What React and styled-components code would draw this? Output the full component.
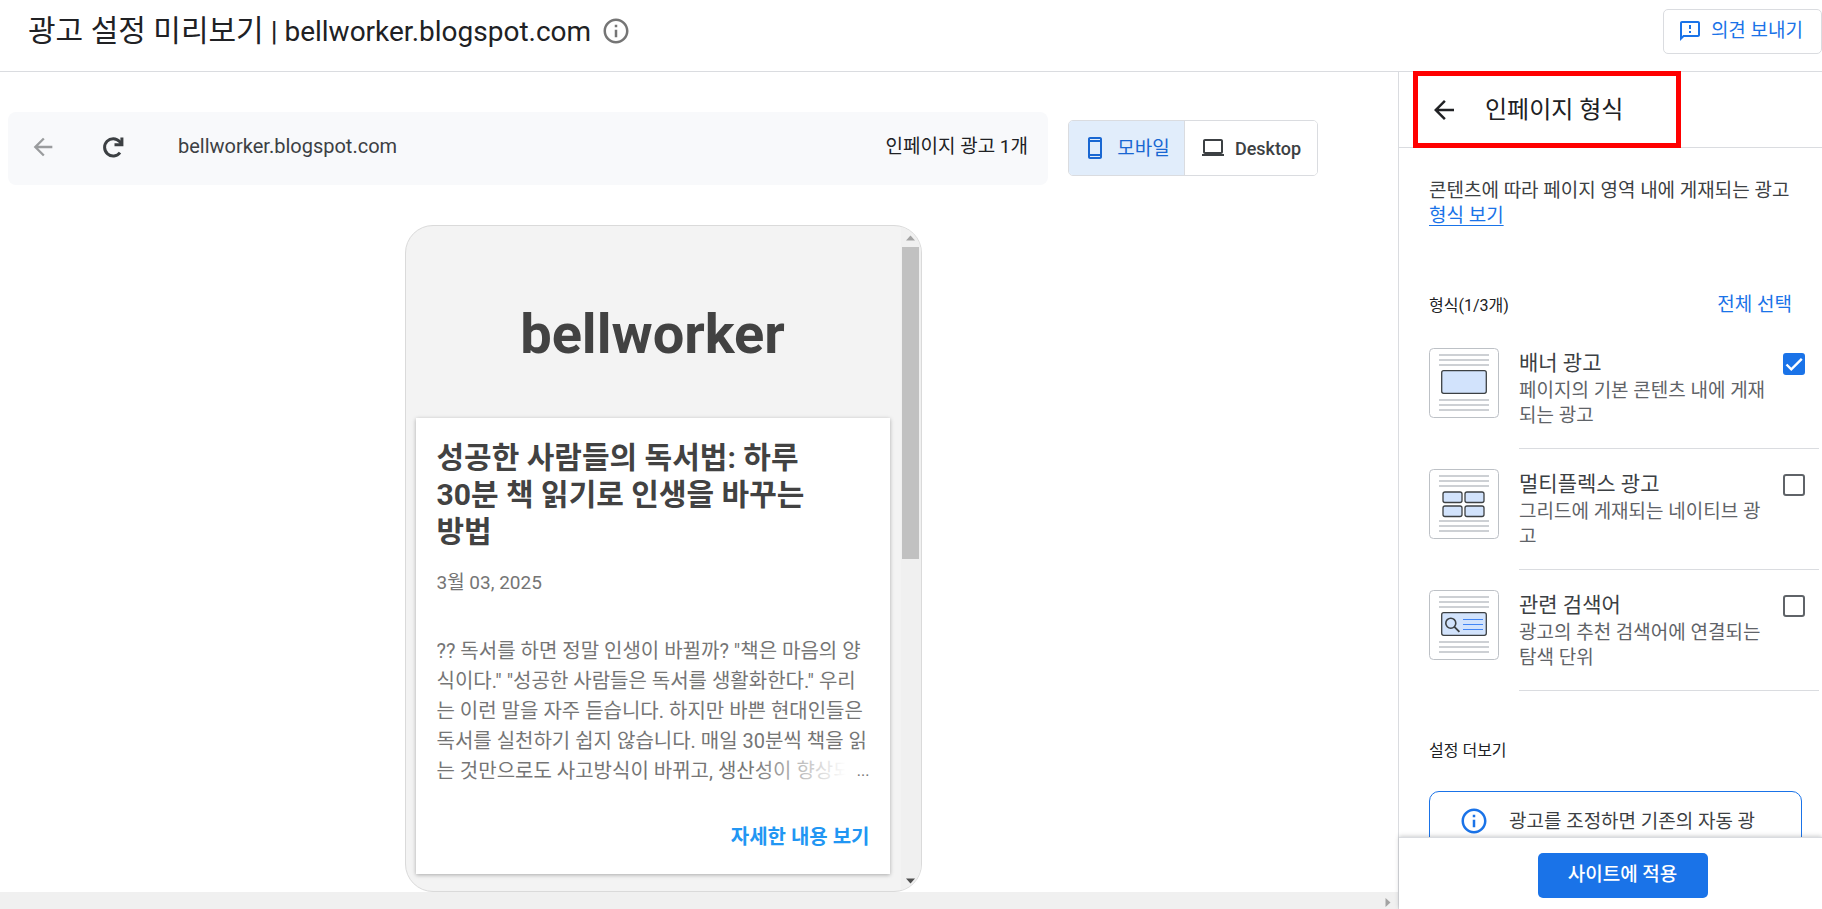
import React, { useState } from "react";
import styled, { createGlobalStyle, css } from "styled-components";

const GlobalStyle = createGlobalStyle`
  * { box-sizing: border-box; }
  body {
    margin: 0;
    background: #fff;
    color: #202124;
    font-family: Roboto, "Noto Sans CJK KR", sans-serif;
    font-size: 19px;
    line-height: 25px;
    overflow: hidden;
  }
  h1, h2, h3, p, ul { margin: 0; padding: 0; font-weight: 400; }
  button { font: inherit; cursor: pointer; }
`;

/* ---------- icons ---------- */

const PATHS = {
  info: "M11 7h2v2h-2zm0 4h2v6h-2zm1-9C6.48 2 2 6.48 2 12s4.48 10 10 10 10-4.48 10-10S17.52 2 12 2zm0 18c-4.41 0-8-3.59-8-8s3.59-8 8-8 8 3.59 8 8-3.59 8-8 8z",
  back: "M20 11H7.83l5.59-5.59L12 4l-8 8 8 8 1.41-1.41L7.83 13H20v-2z",
  feedback:
    "M20 2H4c-1.1 0-1.99.9-1.99 2L2 22l4-4h14c1.1 0 2-.9 2-2V4c0-1.1-.9-2-2-2zm0 14H5.17L4 17.17V4h16v12zM11 12h2v2h-2zm0-6h2v4h-2z",
  phone:
    "M17 1.01L7 1c-1.1 0-2 .9-2 2v18c0 1.1.9 2 2 2h10c1.1 0 2-.9 2-2V3c0-1.1-.9-1.99-2-1.99zM17 21H7v-1h10v1zm0-3H7V6h10v12zm0-14H7V3h10v1z",
  laptop:
    "M20 18c1.1 0 1.99-.9 1.99-2L22 5c0-1.1-.9-2-2-2H4c-1.1 0-2 .9-2 2v11c0 1.1.9 2 2 2H1v2h22v-2h-3zM4 5h16v11H4V5z",
};

const Svg = styled.svg`
  display: block;
  flex: none;
`;

function Icon({ name, size = 24, color = "currentColor" }) {
  return (
    <Svg width={size} height={size} viewBox="0 0 24 24" fill={color} aria-hidden="true">
      <path d={PATHS[name]} />
    </Svg>
  );
}

function RefreshIcon() {
  return (
    <Svg width={28} height={28} viewBox="0 0 28 28" fill="none" stroke="#3c4043" strokeWidth="3" aria-hidden="true">
      <path d="M21 19.6A8.6 8.6 0 1 1 20.6 8.6L22.6 11" />
      <path d="M22.9 4.4v7.4h-7.4" />
    </Svg>
  );
}

const THUMB_LINES = [7, 12, 17, 52, 57, 62];
const THUMB_TILES = [
  [14, 23],
  [36, 23],
  [14, 37],
  [36, 37],
];

function Thumb({ kind }) {
  return (
    <Svg width={70} height={70} viewBox="0 0 70 70" fill="none" aria-hidden="true">
      <rect x=".5" y=".5" width="69" height="69" rx="4" fill="#fff" stroke="#bdc1c6" />
      {THUMB_LINES.map((y) => (
        <path key={y} d={`M10 ${y}h50`} stroke="#cdd0d4" strokeWidth="2" />
      ))}
      {kind === "grid" ? (
        THUMB_TILES.map(([x, y]) => (
          <rect key={`${x}-${y}`} x={x} y={y} width="19" height="10.5" rx="2" fill="#d2e3fc" stroke="#3c4043" strokeWidth="1.3" />
        ))
      ) : (
        <rect x="12.7" y="22.7" width="44.6" height="22.6" rx="2" fill="#d2e3fc" stroke="#3c4043" strokeWidth="1.3" />
      )}
      {kind === "search" && (
        <>
          <circle cx="21.8" cy="33.2" r="5" stroke="#3c4043" strokeWidth="1.6" />
          <path d="M25.4 36.8l5 5" stroke="#3c4043" strokeWidth="1.8" />
          <path d="M34 29.5h20M34 34.5h20M34 39.5h20" stroke="#4285f4" strokeWidth="1.2" />
        </>
      )}
    </Svg>
  );
}

/* ---------- frame ---------- */

const Page = styled.div`
  display: flex;
  flex-direction: column;
  height: 100vh;
`;

const Header = styled.header`
  flex: none;
  display: flex;
  align-items: flex-start;
  justify-content: space-between;
  height: 72px;
  padding: 9px 0 0 28px;
  border-bottom: 1px solid #dadce0;
`;

const HeaderTitle = styled.div`
  display: flex;
  align-items: center;
  gap: 10px;
  height: 44px;
  color: #757575;
`;

const TitleText = styled.h1`
  color: #202124;
  font-size: 28px;
  line-height: 44px;
`;

const TitleLead = styled.span`
  font-size: 30px;
`;

const FeedbackButton = styled.button`
  display: flex;
  align-items: center;
  gap: 9px;
  height: 45px;
  padding: 0 18px 2px 14px;
  border: 1px solid #dadce0;
  border-radius: 5px;
  background: #fff;
  color: #1a73e8;
`;

const Body = styled.div`
  flex: 1;
  min-height: 0;
  display: grid;
  grid-template-columns: minmax(0, 1fr) 424px;
`;

/* ---------- preview ---------- */

const Preview = styled.main`
  display: flex;
  flex-direction: column;
  min-height: 0;
`;

const Workspace = styled.div`
  flex: 1;
  min-height: 0;
  display: flex;
  flex-direction: column;
  align-items: center;
  gap: 40px;
  padding: 40px 80px 0 8px;
`;

const ToolRow = styled.div`
  align-self: stretch;
  flex: none;
  display: flex;
  align-items: flex-start;
  gap: 20px;
`;

const AddressBar = styled.div`
  flex: 1;
  display: flex;
  align-items: center;
  height: 73px;
  padding: 0 20px 4px;
  border-radius: 8px;
  background: #f8f9fb;
`;

const IconButton = styled.button`
  display: grid;
  place-items: center;
  width: 30px;
  height: 40px;
  padding: 0;
  border: 0;
  background: none;
  color: ${(p) => (p.disabled ? "#9a9c9e" : "#202124")};
`;

const NavButtons = styled.div`
  display: flex;
  gap: 40px;
  margin-right: 50px;
`;

const Address = styled.span`
  flex: 1;
  color: #3c4043;
  font-size: 20px;
`;

const AdCount = styled.span`
  color: #202124;
`;

const Toggle = styled.div`
  display: flex;
  height: 56px;
  margin-top: 8px;
  border: 1px solid #dadce0;
  border-radius: 5px;
  overflow: hidden;
`;

const ToggleButton = styled.button`
  display: flex;
  align-items: center;
  justify-content: center;
  gap: 10px;
  width: ${(p) => (p.$active ? 116 : 132)}px;
  padding: 0;
  border: 0;
  font-size: 18px;
  font-weight: 500;
  background: #fff;
  color: #3c4043;
  ${(p) =>
    p.$active &&
    css`
      border-right: 1px solid #dadce0;
      font-size: 19px;
      font-weight: 400;
      background: #e1edfb;
      color: #1967d2;
    `}
`;

const Phone = styled.section`
  flex: 1;
  min-height: 0;
  display: flex;
  width: 517px;
  border: 1px solid #dadada;
  border-radius: 28px;
  background: #f3f3f3;
  overflow: hidden;
`;

const Screen = styled.div`
  flex: 1;
  display: flex;
  flex-direction: column;
  padding: 0 11px 17px 10px;
`;

const BlogName = styled.h2`
  flex: 1;
  display: grid;
  place-items: center;
  padding-top: 24px;
  color: #424242;
  font-size: 56px;
  line-height: 64px;
  font-weight: 700;
`;

const Card = styled.article`
  display: flex;
  flex-direction: column;
  padding: 21px 20px 20px 21px;
  background: #fff;
  box-shadow: 0 1px 4px rgba(0, 0, 0, 0.3);
  color: #757575;
  font-size: 20px;
  line-height: 30px;
`;

const PostTitle = styled.h3`
  width: 384px;
  color: #424242;
  font-size: 30px;
  line-height: 37px;
  font-weight: 700;
`;

const PostDate = styled.p`
  padding: 18px 0 38px;
  font-size: 19px;
`;

const Excerpt = styled.p`
  position: relative;
  height: 150px;
  overflow: hidden;
`;

const Fade = styled.span`
  position: absolute;
  right: 0;
  bottom: 0;
  width: 120px;
  height: 30px;
  background: linear-gradient(to right, rgba(255, 255, 255, 0), #fff 80%);
`;

const Dots = styled.span`
  position: absolute;
  right: 0;
  bottom: 0;
  font-size: 16px;
`;

const ReadMore = styled.a`
  align-self: flex-end;
  padding: 36px 0 2px;
  color: #2196f3;
  font-weight: 700;
  text-decoration: none;
`;

const VScroll = styled.div`
  flex: none;
  display: flex;
  flex-direction: column;
  align-items: center;
  width: 20px;
  padding: 9px 0 7px;
  background: #f0f0f0;
`;

const VThumb = styled.div`
  width: 17px;
  height: 312px;
  margin: 6px 0 auto;
  background: #c1c1c1;
`;

const HScroll = styled.div`
  flex: none;
  display: flex;
  align-items: center;
  justify-content: flex-end;
  height: 17px;
  padding: 3px 7px 0 0;
  background: #f0f0f0;
`;

/* ---------- settings panel ---------- */

const Panel = styled.aside`
  display: flex;
  flex-direction: column;
  min-height: 0;
  border-left: 1px solid #dadce0;
`;

const PanelHeader = styled.div`
  position: relative;
  flex: none;
  display: flex;
  align-items: center;
  gap: 26px;
  height: 76px;
  padding-left: 30px;
  border-bottom: 1px solid #dadce0;
`;

const Highlight = styled.div`
  position: absolute;
  left: 14px;
  top: -1px;
  width: 268px;
  height: 77px;
  border: 5px solid #f00;
  pointer-events: none;
`;

const PanelTitle = styled.h2`
  font-size: 24px;
  line-height: 32px;
`;

const PanelBody = styled.div`
  flex: 1;
  min-height: 0;
  overflow: hidden;
  padding: 30px 20px 0 30px;
`;

const Intro = styled.p`
  color: #3c4043;
`;

const Link = styled.a`
  color: #1a73e8;
  text-decoration: underline;
  text-underline-offset: 3px;
`;

const SectionHead = styled.div`
  display: flex;
  align-items: center;
  justify-content: space-between;
  height: 40px;
  margin: 56px 0 24px;
  padding-right: 10px;
`;

const Label = styled.h3`
  padding-top: 4px;
  font-size: 16px;
  line-height: 20px;
`;

const TextButton = styled.button`
  padding: 0;
  border: 0;
  background: none;
  color: #1a73e8;
`;

const FormatList = styled.ul`
  list-style: none;
`;

const FormatItem = styled.li`
  display: flex;
  gap: 20px;
  height: 121px;
`;

const FormatRow = styled.label`
  flex: 1;
  display: flex;
  justify-content: space-between;
  height: 101px;
  margin-right: -17px;
  padding-right: 14px;
  border-bottom: 1px solid #dadce0;
`;

const FormatText = styled.span`
  width: 256px;
  color: #5f6368;
`;

const FormatName = styled.span`
  display: block;
  color: #3c4043;
  font-size: 21px;
  line-height: 30px;
`;

const Check = styled.input`
  flex: none;
  appearance: none;
  width: 22px;
  height: 22px;
  margin: 5px 0 0;
  border: 2px solid #5f6368;
  border-radius: 3px;
  background: #fff;
  cursor: pointer;
  &:checked {
    border-color: #1a73e8;
    background: #1a73e8
      url("data:image/svg+xml,%3Csvg xmlns='http://www.w3.org/2000/svg' viewBox='0 0 18 18'%3E%3Cpath d='M1.5 9.5l4.8 4.8L16.8 3.8' fill='none' stroke='white' stroke-width='2.4'/%3E%3C/svg%3E")
      center / 18px no-repeat;
  }
`;

const MoreLabel = styled(Label)`
  padding: 30px 0;
`;

const Notice = styled.div`
  display: flex;
  gap: 20px;
  height: 90px;
  padding: 14px 36px 0 29px;
  border: 1px solid #1a73e8;
  border-radius: 10px;
  color: #3c4043;
  line-height: 31px;
`;

const PanelFooter = styled.div`
  flex: none;
  display: flex;
  justify-content: center;
  padding: 15px 0 11px 24px;
  border-top: 1px solid #dadce0;
  background: #fff;
  box-shadow: 0 -1px 4px rgba(60, 64, 67, 0.25);
`;

const ApplyButton = styled.button`
  width: 170px;
  height: 45px;
  padding: 0 0 2px;
  border: 0;
  border-radius: 5px;
  background: #1a73e8;
  color: #fff;
  font-weight: 500;
`;

const FORMATS = [
  { kind: "banner", name: "배너 광고", text: "페이지의 기본 콘텐츠 내에 게재되는 광고" },
  { kind: "grid", name: "멀티플렉스 광고", text: "그리드에 게재되는 네이티브 광고" },
  { kind: "search", name: "관련 검색어", text: "광고의 추천 검색어에 연결되는 탐색 단위" },
];

export default function App() {
  const [selected, setSelected] = useState({ banner: true });
  const flip = (kind) => setSelected((s) => ({ ...s, [kind]: !s[kind] }));
  const selectAll = () => setSelected(Object.fromEntries(FORMATS.map((f) => [f.kind, true])));
  const count = FORMATS.filter((f) => selected[f.kind]).length;

  return (
    <>
      <GlobalStyle />
      <Page>
        <Header>
          <HeaderTitle>
            <TitleText>
              <TitleLead>광고 설정 미리보기</TitleLead> | bellworker.blogspot.com
            </TitleText>
            <Icon name="info" size={30} />
          </HeaderTitle>
          <FeedbackButton type="button">
            <Icon name="feedback" />
            의견 보내기
          </FeedbackButton>
        </Header>
        <Body>
          <Preview>
            <Workspace>
              <ToolRow>
                <AddressBar>
                  <NavButtons>
                    <IconButton type="button" disabled aria-label="뒤로">
                      <Icon name="back" size={28} />
                    </IconButton>
                    <IconButton type="button" aria-label="새로고침">
                      <RefreshIcon />
                    </IconButton>
                  </NavButtons>
                  <Address>bellworker.blogspot.com</Address>
                  <AdCount>인페이지 광고 1개</AdCount>
                </AddressBar>
                <Toggle>
                  <ToggleButton type="button" $active>
                    <Icon name="phone" />
                    모바일
                  </ToggleButton>
                  <ToggleButton type="button">
                    <Icon name="laptop" />
                    Desktop
                  </ToggleButton>
                </Toggle>
              </ToolRow>
              <Phone>
                <Screen>
                  <BlogName>bellworker</BlogName>
                  <Card>
                    <PostTitle>성공한 사람들의 독서법: 하루 30분 책 읽기로 인생을 바꾸는 방법</PostTitle>
                    <PostDate>3월 03, 2025</PostDate>
                    <Excerpt>
                      ?? 독서를 하면 정말 인생이 바뀔까? "책은 마음의 양식이다." "성공한 사람들은 독서를 생활화한다." 우리는 이런 말을
                      자주 듣습니다. 하지만 바쁜 현대인들은 독서를 실천하기 쉽지 않습니다. 매일 30분씩 책을 읽는 것만으로도
                      사고방식이 바뀌고, 생산성이 향상되
                      <Fade />
                      <Dots>...</Dots>
                    </Excerpt>
                    <ReadMore href="#post">자세한 내용 보기</ReadMore>
                  </Card>
                </Screen>
                <VScroll>
                  <Svg width="9" height="6" viewBox="0 0 9 6" fill="#a3a3a3">
                    <path d="M0 5.5L4.5 .5 9 5.5z" />
                  </Svg>
                  <VThumb />
                  <Svg width="9" height="6" viewBox="0 0 9 6" fill="#505050">
                    <path d="M0 .5L4.5 5.5 9 .5z" />
                  </Svg>
                </VScroll>
              </Phone>
            </Workspace>
            <HScroll>
              <Svg width="6" height="9" viewBox="0 0 6 9" fill="#a3a3a3">
                <path d="M.5 0L5.5 4.5.5 9z" />
              </Svg>
            </HScroll>
          </Preview>
          <Panel>
            <PanelHeader>
              <IconButton type="button" aria-label="뒤로">
                <Icon name="back" size={30} />
              </IconButton>
              <PanelTitle>인페이지 형식</PanelTitle>
              <Highlight />
            </PanelHeader>
            <PanelBody>
              <Intro>
                콘텐츠에 따라 페이지 영역 내에 게재되는 광고
                <br />
                <Link href="#formats">형식 보기</Link>
              </Intro>
              <SectionHead>
                <Label>형식({count}/3개)</Label>
                <TextButton type="button" onClick={selectAll}>
                  전체 선택
                </TextButton>
              </SectionHead>
              <FormatList id="formats">
                {FORMATS.map((f) => (
                  <FormatItem key={f.kind}>
                    <Thumb kind={f.kind} />
                    <FormatRow>
                      <FormatText>
                        <FormatName>{f.name}</FormatName>
                        {f.text}
                      </FormatText>
                      <Check type="checkbox" checked={!!selected[f.kind]} onChange={() => flip(f.kind)} />
                    </FormatRow>
                  </FormatItem>
                ))}
              </FormatList>
              <MoreLabel>설정 더보기</MoreLabel>
              <Notice>
                <Icon name="info" size={30} color="#1a73e8" />
                광고를 조정하면 기존의 자동 광
              </Notice>
            </PanelBody>
            <PanelFooter>
              <ApplyButton type="button">사이트에 적용</ApplyButton>
            </PanelFooter>
          </Panel>
        </Body>
      </Page>
    </>
  );
}
